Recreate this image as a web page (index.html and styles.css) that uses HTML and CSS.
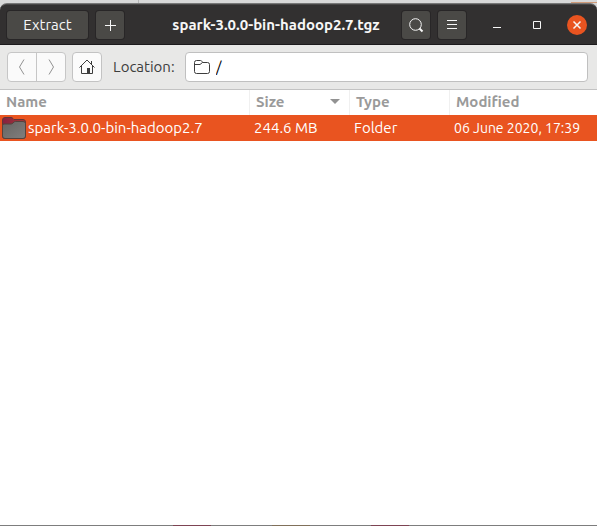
FILE: index.html
```html
<!DOCTYPE html>
<html lang="en">
<head>
<meta charset="utf-8">
<title>spark-3.0.0-bin-hadoop2.7.tgz</title>
<link rel="stylesheet" href="styles.css">
</head>
<body>
<div class="backdrop"><span class="backdrop-tab"></span><span class="backdrop-accent"></span></div>
<div class="window">
  <header class="titlebar">
    <button class="dark-button extract" type="button">Extract</button>
    <button class="dark-button square" type="button" aria-label="Add files">
      <svg width="16" height="16" viewBox="0 0 16 16"><path d="M8.500 3v11M3 8.500h11" /></svg>
    </button>
    <h1 class="title">spark-3.0.0-bin-hadoop2.7.tgz</h1>
    <button class="dark-button square" type="button" aria-label="Search">
      <svg width="16" height="16" viewBox="0 0 16 16"><circle cx="7.500" cy="7.500" r="5.800"/><path d="M11.500 11.500l3 3" stroke-width="2"/></svg>
    </button>
    <button class="dark-button square" type="button" aria-label="Menu">
      <svg width="16" height="16" viewBox="0 0 16 16"><path d="M3 3.500h10M3 7.500h10M3 11.500h10"/></svg>
    </button>
    <div class="window-controls">
      <button type="button" aria-label="Minimize"><svg width="16" height="16" viewBox="0 0 16 16"><path d="M4 10.500h8"/></svg></button>
      <button type="button" aria-label="Maximize"><svg width="16" height="16" viewBox="0 0 16 16"><path d="M4.500 4.500h7v7h-7z"/></svg></button>
      <button class="close" type="button" aria-label="Close"><svg width="16" height="16" viewBox="0 0 16 16"><path d="M4.500 4.500l7 7M11.500 4.500l-7 7" stroke-width="1.500"/></svg></button>
    </div>
  </header>
  <div class="toolbar">
    <div class="nav-group">
      <button type="button" disabled aria-label="Back"><svg width="16" height="16" viewBox="0 0 16 16"><path d="M10 .5L5.500 8l4.500 7.500"/></svg></button>
      <button type="button" disabled aria-label="Forward"><svg width="16" height="16" viewBox="0 0 16 16"><path d="M6 .5L10.500 8 6 15.500"/></svg></button>
    </div>
    <button class="home" type="button" aria-label="Home">
      <svg width="16" height="16" viewBox="0 0 16 16"><path d="M.5 8.500L8 1l7.500 7.500M2.500 7v7.500h11V7M12.500 5V2"/><path class="door" d="M8 9h3v6H8z"/></svg>
    </button>
    <label class="location-label" for="location">Location:</label>
    <div class="location-field">
      <svg width="16" height="16" viewBox="0 0 16 16"><path d="M.5 12.500v-9q0-2 2-2h4q1 0 1.500 1l.5 1h5q2 0 2 2v7q0 2-2 2h-11q-2 0-2-2zM.5 5.500h5.500l2.500-2"/></svg>
      <input id="location" type="text" value="/">
    </div>
  </div>
  <table class="files">
    <colgroup><col class="name-col"><col class="size-col"><col class="type-col"><col></colgroup>
    <thead>
      <tr><th>Name</th><th><span class="sorted">Size<svg width="10" height="5" viewBox="0 0 10 5"><path d="M0 0h10L5 5z"/></svg></span></th><th>Type</th><th>Modified</th></tr>
    </thead>
    <tbody>
      <tr>
        <td><span class="file-name"><svg width="24" height="22" viewBox="0 0 24 22">
          <defs>
            <linearGradient id="front" x1="0" y1="0" x2="1" y2="1"><stop offset="0" stop-color="#666462"/><stop offset="1" stop-color="#817f7d"/></linearGradient>
            <linearGradient id="back" x1="0" y1="0" x2="1" y2="0"><stop offset="0" stop-color="#85213f"/><stop offset="1" stop-color="#a83835"/></linearGradient>
          </defs>
          <path d="M.5 19V3q0-2.500 2.500-2.500h6q1 0 2 1l1 1h9q2.500 0 2.500 2.500v14q0 2.500-2.500 2.500H3Q.5 21.500.5 19z" fill="url(#back)" stroke="#613538"/>
          <path d="M.5 19V8.500Q.5 7 2 7h7q1 0 2-1l1-1q.5-.5 1.500-.5H21q2.500 0 2.500 2V19q0 2.500-2.500 2.500H3Q.5 21.500.5 19z" fill="url(#front)" stroke="#55433d"/>
        </svg>spark-3.0.0-bin-hadoop2.7</span></td>
        <td>244.6 MB</td><td>Folder</td><td class="date">06 June 2020, 17:39</td>
      </tr>
    </tbody>
  </table>
</div>
<div class="backdrop-edge"><span></span><span class="tan"></span><span></span></div>
</body>
</html>
```
FILE: styles.css
```css
* { box-sizing: border-box; }

body {
  margin: 0;
  min-height: 100vh;
  display: flex;
  flex-direction: column;
  background: #d8d8d8;
  color: #3d3d3d;
  font: 15px/20px Ubuntu, "Noto Sans", sans-serif;
}

button, input { font: inherit; color: inherit; margin: 0; }

svg { display: block; flex: none; fill: none; stroke: currentColor; }

.backdrop {
  display: flex;
  justify-content: space-between;
  height: 3px;
  background: #d8d8d8;
}
.backdrop-tab { width: 139px; border-right: 1px solid #b5b5b5; }
.backdrop-accent { width: 26px; margin-top: 2px; background: #cf9a78; }

.backdrop-edge {
  display: flex;
  justify-content: center;
  gap: 61px;
  height: 1px;
  padding-right: 15px;
  background: #7d7d7d;
}
.backdrop-edge span { width: 38px; background: #7d4453; }
.backdrop-edge .tan { background: #80705a; }

.window {
  flex: 1;
  display: flex;
  flex-direction: column;
  background: #fff;
  border-top: 1px solid #777;
  border-radius: 7px 7px 0 0;
}

.titlebar {
  display: flex;
  align-items: center;
  gap: 8px;
  height: 41px;
  padding: 0 10px 0 7px;
  background: #323030;
  border-top: 1px solid #484646;
  border-bottom: 1px solid #1c1a1c;
  border-radius: 6px 6px 0 0;
  color: #f7f7f7;
}

.title {
  flex: 1;
  margin: 0;
  padding-left: 26px;
  font-size: 15px;
  font-weight: 700;
  text-align: center;
  white-space: nowrap;
}

.dark-button {
  display: flex;
  align-items: center;
  justify-content: center;
  height: 28px;
  padding: 0 16px;
  border: 0;
  border-radius: 3px;
  background: #4a4946;
  box-shadow: 0 0 0 1px #282627;
}
.extract { width: 81px; }
.square { width: 28px; padding: 0; }

.window-controls { display: flex; gap: 20px; padding-left: 13px; }
.window-controls button {
  display: flex;
  align-items: center;
  justify-content: center;
  width: 20px;
  height: 20px;
  padding: 0;
  border: 0;
  border-radius: 50%;
  background: none;
}
.window-controls .close { background: #e95420; }

.toolbar {
  display: flex;
  align-items: center;
  height: 45px;
  padding: 0 9px 0 7px;
  background: #e8e8e7;
  border-bottom: 1px solid #c3c3c3;
}

.nav-group {
  display: flex;
  width: 59px;
  height: 30px;
  margin-right: 6px;
  background: #fafafa;
  border: 1px solid #c6c6c6;
  border-radius: 4px;
}
.nav-group button {
  flex: 1;
  display: flex;
  align-items: center;
  justify-content: center;
  padding: 0;
  border: 0;
  background: none;
  color: #929292;
}
.nav-group button + button { border-left: 1px solid #c6c6c6; }

.home {
  display: flex;
  align-items: center;
  justify-content: center;
  width: 30px;
  height: 30px;
  padding: 0;
  background: #fbfbfb;
  border: 1px solid #c3c3c3;
  border-radius: 4px;
}
.door { fill: currentColor; stroke: none; }

.location-label { width: 72px; margin-left: 11px; white-space: nowrap; }

.location-field {
  flex: 1;
  display: flex;
  align-items: center;
  gap: 6px;
  height: 30px;
  padding: 0 8px;
  background: #fff;
  border: 1px solid #c0c0c0;
  border-radius: 4px;
}
.location-field input {
  flex: 1;
  min-width: 0;
  padding: 0;
  border: 0;
  outline: 0;
  background: none;
  color: #000;
}

.files {
  width: 100%;
  table-layout: fixed;
  border-collapse: separate;
  border-spacing: 0;
  text-align: left;
  white-space: nowrap;
}
.name-col { width: 250px; }
.size-col, .type-col { width: 100px; }
.files th {
  height: 25px;
  padding: 0 9px 2px 6px;
  border-right: 1px solid #f0f0f0;
  color: #9a9a9a;
}
.files th:last-child { border-right: 0; }
.sorted { display: flex; align-items: center; justify-content: space-between; }
.sorted svg { fill: #929292; stroke: none; }
.files td {
  height: 26px;
  padding: 0 0 0 4px;
  background: #e95420;
  color: #fff;
}
.files td:first-child { padding-left: 2px; }
.files .date { font-size: 14px; }
.file-name { display: flex; align-items: center; gap: 2px; }
```
